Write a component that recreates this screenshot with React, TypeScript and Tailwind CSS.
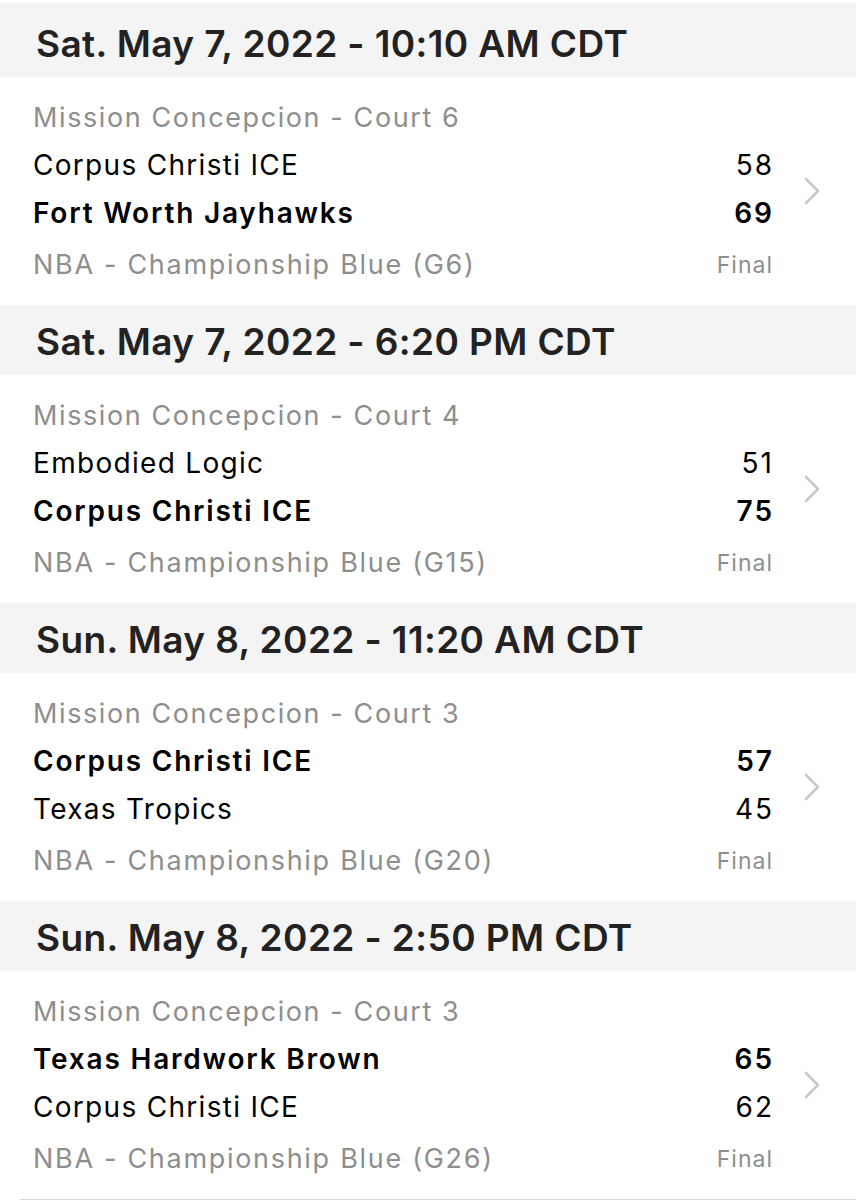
import React from "react";

type Game = {
  header: string;
  court: string;
  t1: string;
  s1: string;
  w1: boolean;
  t2: string;
  s2: string;
  w2: boolean;
  league: string;
};

const games: Game[] = [
  {
    header: "Sat. May 7, 2022 - 10:10 AM CDT",
    court: "Mission Concepcion - Court 6",
    t1: "Corpus Christi ICE",
    s1: "58",
    w1: false,
    t2: "Fort Worth Jayhawks",
    s2: "69",
    w2: true,
    league: "NBA - Championship Blue (G6)",
  },
  {
    header: "Sat. May 7, 2022 - 6:20 PM CDT",
    court: "Mission Concepcion - Court 4",
    t1: "Embodied Logic",
    s1: "51",
    w1: false,
    t2: "Corpus Christi ICE",
    s2: "75",
    w2: true,
    league: "NBA - Championship Blue (G15)",
  },
  {
    header: "Sun. May 8, 2022 - 11:20 AM CDT",
    court: "Mission Concepcion - Court 3",
    t1: "Corpus Christi ICE",
    s1: "57",
    w1: true,
    t2: "Texas Tropics",
    s2: "45",
    w2: false,
    league: "NBA - Championship Blue (G20)",
  },
  {
    header: "Sun. May 8, 2022 - 2:50 PM CDT",
    court: "Mission Concepcion - Court 3",
    t1: "Texas Hardwork Brown",
    s1: "65",
    w1: true,
    t2: "Corpus Christi ICE",
    s2: "62",
    w2: false,
    league: "NBA - Championship Blue (G26)",
  },
];

function Chevron() {
  return (
    <svg width="16" height="28" viewBox="0 0 16 28" fill="none">
      <path d="M2 2 L14 14 L2 26" stroke="#c7c7cc" strokeWidth="2.6" strokeLinecap="round" strokeLinejoin="round" />
    </svg>
  );
}

function TeamRow({ name, score, win }: { name: string; score: string; win: boolean }) {
  return (
    <div className="h-[48px] flex items-center justify-between text-[28px] text-black">
      <span className={win ? "font-semibold tracking-[1.8px]" : "tracking-[1.3px]"}>{name}</span>
      <span className={win ? "font-semibold tracking-[2px] -mr-[2px]" : "tracking-[2px] -mr-[2px]"}>{score}</span>
    </div>
  );
}

function Section({ g, first }: { g: Game; first: boolean }) {
  return (
    <div>
      <div
        className={`bg-[#f4f4f4] flex items-center pl-[36px] text-[#222222] font-semibold text-[37px] tracking-[0.4px] ${
          first ? "h-[74px] pt-[8px]" : "h-[70px] pt-[4px]"
        }`}
      >
        {g.header}
      </div>
      <div className="bg-white flex items-center h-[228px]">
        <div className="flex-1 pl-[33px] pt-[18px] pb-[12px] flex flex-col">
          <div className="h-[46px] flex items-center text-[27px] text-[#8e8e8e] tracking-[1.6px]">{g.court}</div>
          <TeamRow name={g.t1} score={g.s1} win={g.w1} />
          <TeamRow name={g.t2} score={g.s2} win={g.w2} />
          <div className="h-[56px] flex items-center justify-between text-[#8e8e8e]">
            <span className="text-[27px] tracking-[1.7px]">{g.league}</span>
            <span className="text-[23px] tracking-[1px] -mr-[1px]">Final</span>
          </div>
        </div>
        <div className="w-[84px] flex justify-start pl-[32px]">
          <Chevron />
        </div>
      </div>
    </div>
  );
}

export default function App() {
  return (
    <div className="w-[856px] h-[1200px] bg-white overflow-hidden" style={{ fontFamily: "Inter, 'Liberation Sans', sans-serif" }}>
      <div className="h-[3px] bg-white" />
      {games.map((g, i) => (
        <Section key={i} g={g} first={i === 0} />
      ))}
      <div className="ml-[20px] h-[2px] bg-[#d8d8dc]" />
    </div>
  );
}
